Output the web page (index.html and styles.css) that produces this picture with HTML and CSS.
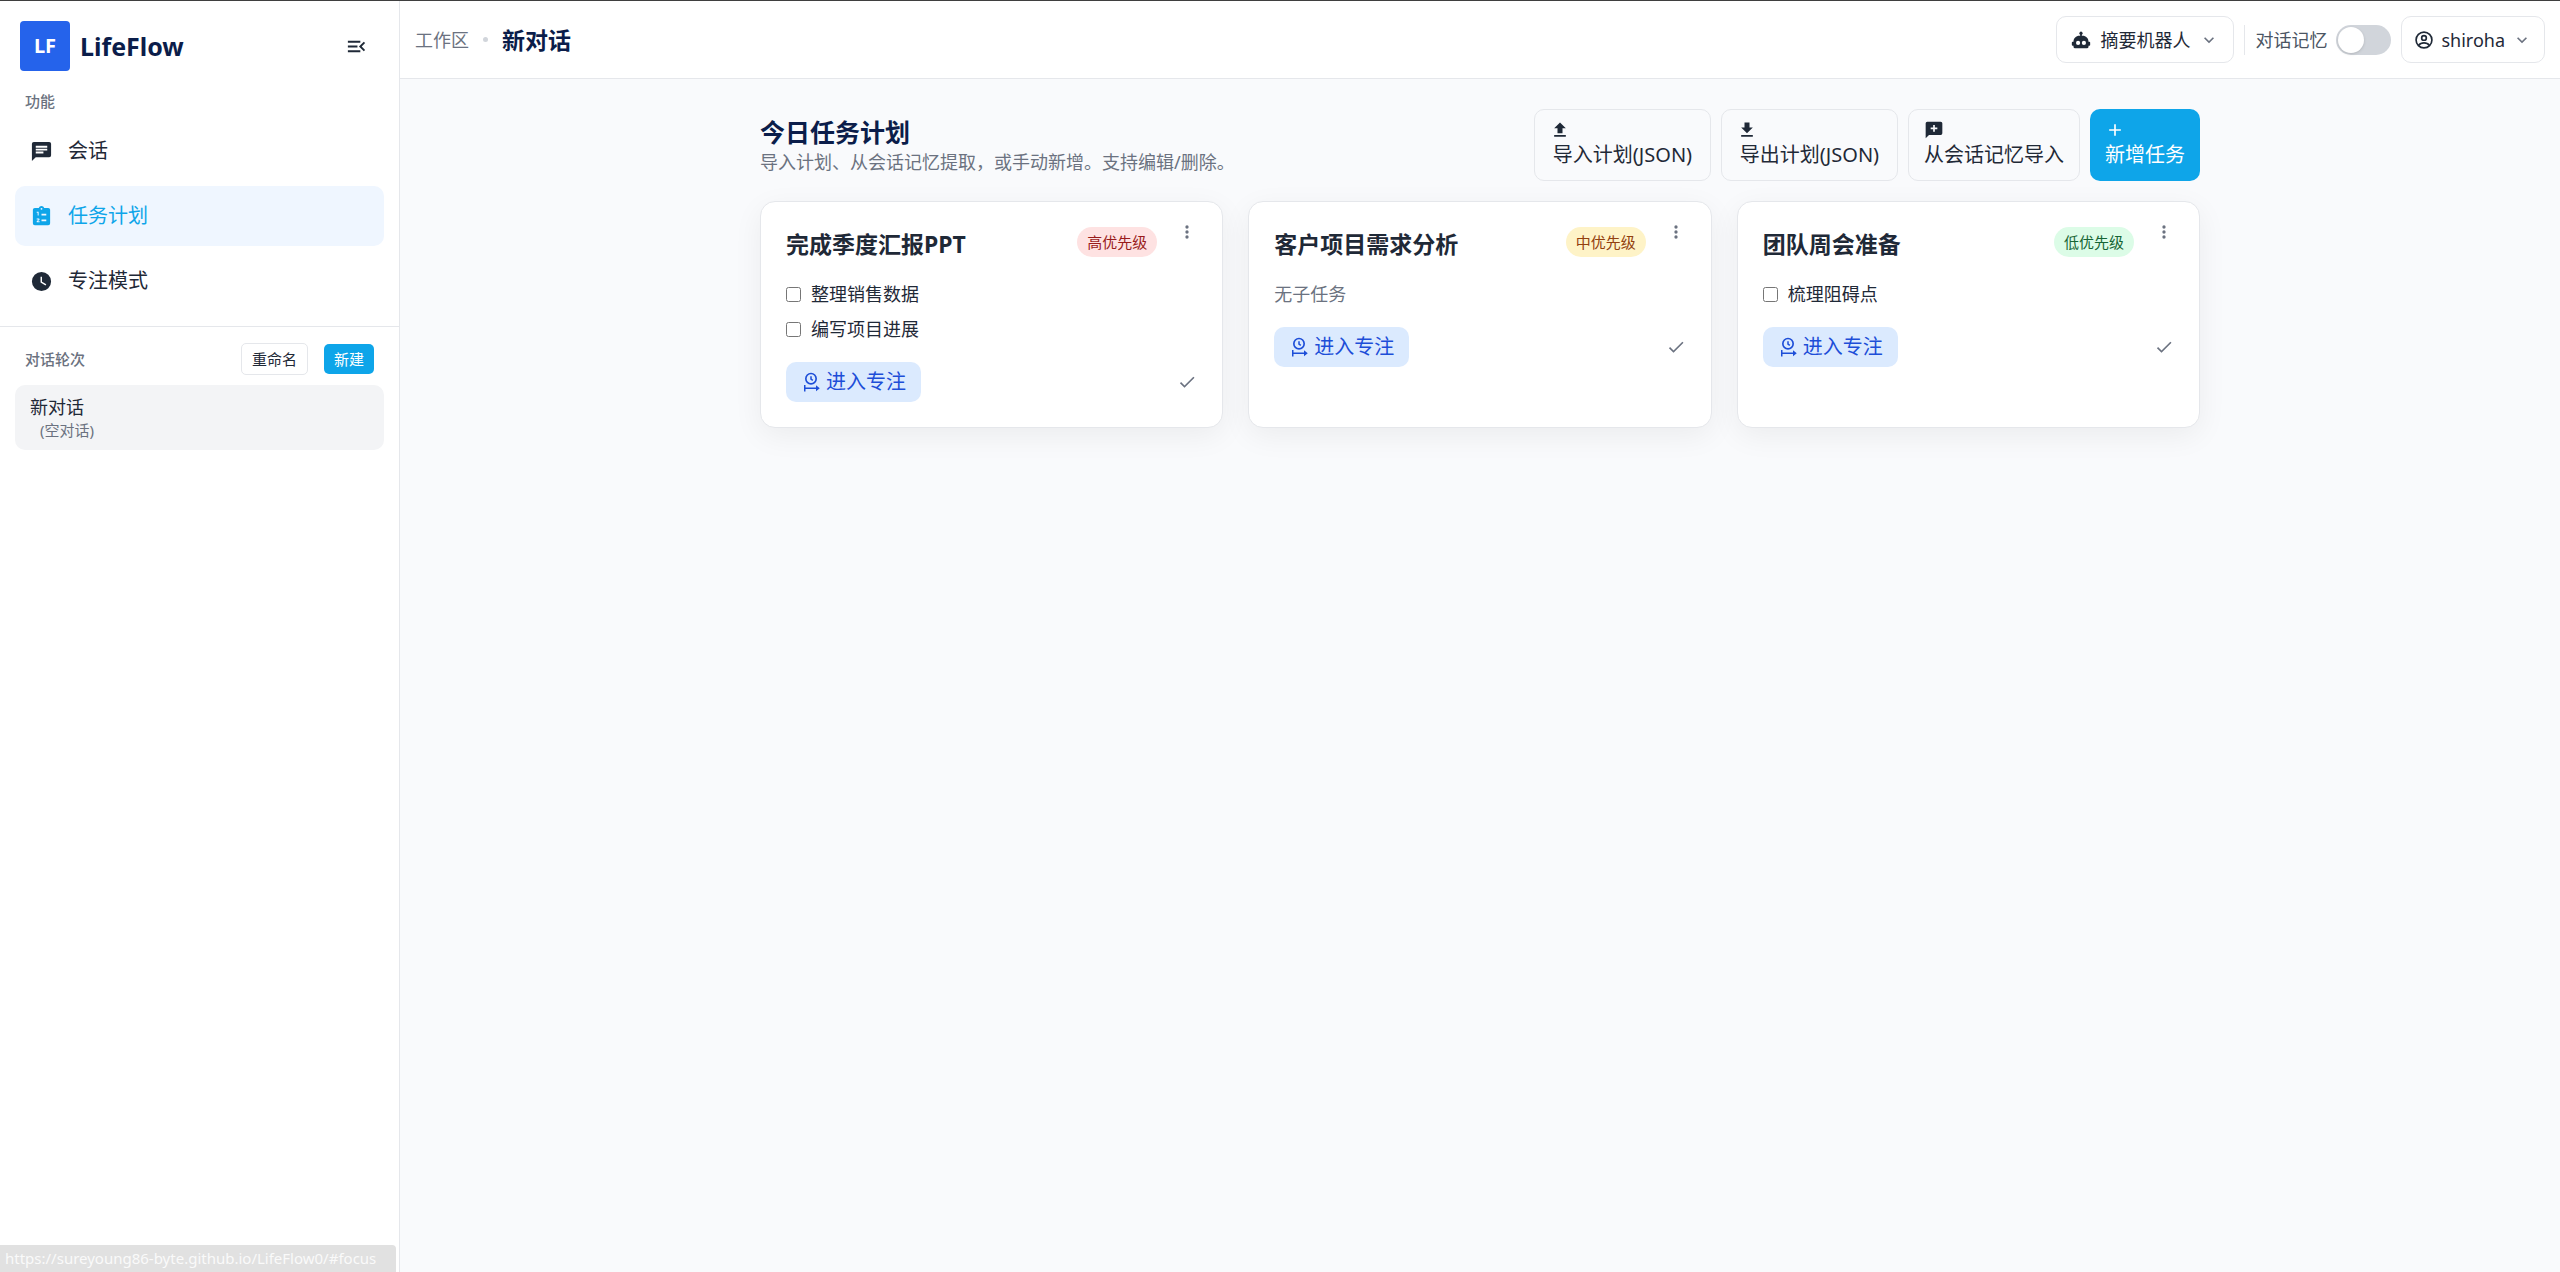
FILE: index.html
```html
<!DOCTYPE html>
<html lang="zh-CN">
<head>
  <meta charset="UTF-8">
  <meta name="viewport" content="width=device-width, initial-scale=1.0">
  <title>LifeFlow</title>
  <link rel="stylesheet" href="styles.css">
</head>
<body>
  <!-- shared icons -->
  <svg class="sprite" aria-hidden="true">
    <symbol id="i-focus" viewBox="0 0 24 24">
      <circle cx="12" cy="8" r="6.200" fill="none" stroke="currentColor" stroke-width="2"/>
      <path d="M12 5v3.400l2.200 1.600M4.500 15.500v8M4.500 19.500h14" fill="none" stroke="currentColor" stroke-width="1.800"/>
      <path d="M18 16v7l4.500-3.500z" fill="currentColor"/>
    </symbol>
    <symbol id="i-more" viewBox="0 0 24 24">
      <path fill="currentColor" d="M12 16a2 2 0 1 1 0 4 2 2 0 0 1 0-4m0-6a2 2 0 1 1 0 4 2 2 0 0 1 0-4m0-6a2 2 0 1 1 0 4 2 2 0 0 1 0-4z"/>
    </symbol>
    <symbol id="i-check" viewBox="0 0 24 24">
      <path fill="currentColor" d="M21 7 9 19l-5.500-5.500 1.410-1.410L9 16.170 19.590 5.590z"/>
    </symbol>
    <symbol id="i-down" viewBox="0 0 24 24">
      <path fill="currentColor" d="M7.410 8.580 12 13.170l4.590-4.590L18 10l-6 6-6-6z"/>
    </symbol>
  </svg>

  <div class="app">
    <aside class="sidebar">
      <div class="brand">
        <span class="logo">LF</span>
        <span class="brand-name">LifeFlow</span>
        <button class="icon-btn collapse" type="button" aria-label="收起侧栏">
          <svg class="icon-lg" viewBox="0 0 24 24"><path fill="currentColor" d="M21 15.610 19.590 17l-5.010-5 5.010-5L21 8.390 17.440 12 21 15.610M3 6h13v2H3V6m0 7v-2h10v2H3m0 5v-2h13v2H3z"/></svg>
        </button>
      </div>

      <p class="section-label">功能</p>
      <nav class="nav">
        <a class="nav-item" href="#chat">
          <svg class="icon-lg" viewBox="0 0 24 24"><path fill="currentColor" d="M20 2H4a2 2 0 0 0-2 2v18l4-4h14a2 2 0 0 0 2-2V4a2 2 0 0 0-2-2M6 9h12v2H6m8 3H6v-2h8m4-4H6V6h12"/></svg>
          会话
        </a>
        <a class="nav-item active" href="#tasks">
          <svg class="icon-lg" viewBox="0 0 24 24"><path fill="currentColor" d="M19 3h-4.180C14.400 1.840 13.300 1 12 1s-2.400.840-2.820 2H5a2 2 0 0 0-2 2v14a2 2 0 0 0 2 2h14a2 2 0 0 0 2-2V5a2 2 0 0 0-2-2m-7 0a1 1 0 1 1 0 2 1 1 0 0 1 0-2M7 7h2v4H8V8H7V7m3 10v1H7v-.920L9 15H7v-1h2.250c.410 0 .750.340.750.750 0 .200-.080.390-.210.520L8.120 17H10m1-13M17 17h-5v-2h5v2m0-6h-5V9h5v2z"/></svg>
          任务计划
        </a>
        <a class="nav-item" href="#focus">
          <svg class="icon-lg" viewBox="0 0 24 24"><path fill="currentColor" d="M12 2a10 10 0 1 0 0 20 10 10 0 0 0 0-20m4.200 14.200L11 13V7h1.500v5.200l4.500 2.700-.800 1.300z"/></svg>
          专注模式
        </a>
      </nav>

      <div class="rounds">
        <div class="rounds-head">
          <span class="rounds-title">对话轮次</span>
          <button class="btn-sm btn-outline" type="button">重命名</button>
          <button class="btn-sm btn-primary" type="button">新建</button>
        </div>
        <a class="round" href="#round">
          <span class="round-name">新对话</span>
          <span class="round-note">(空对话)</span>
        </a>
      </div>
    </aside>

    <div class="content">
      <header class="topbar">
        <span class="crumb">工作区</span>
        <span class="dot"></span>
        <h1 class="page-name">新对话</h1>
        <div class="topbar-right">
          <button class="picker" type="button">
            <svg class="icon" viewBox="0 0 24 24"><path fill="currentColor" d="M22 14h-1c0-3.870-3.130-7-7-7h-1V5.730A2 2 0 1 0 11 5.730V7h-1c-3.870 0-7 3.130-7 7H2a1 1 0 0 0-1 1v3a1 1 0 0 0 1 1h1v1a2 2 0 0 0 2 2h14a2 2 0 0 0 2-2v-1h1a1 1 0 0 0 1-1v-3a1 1 0 0 0-1-1M8.500 13a2.500 2.500 0 1 1 0 5 2.500 2.500 0 0 1 0-5m7 0a2.500 2.500 0 1 1 0 5 2.500 2.500 0 0 1 0-5z"/></svg>
            摘要机器人
            <svg class="icon chevron"><use href="#i-down"/></svg>
          </button>
          <div class="memory">
            <label for="memory">对话记忆</label>
            <input class="switch" type="checkbox" id="memory">
          </div>
          <button class="picker user" type="button">
            <svg class="icon" viewBox="0 0 24 24"><g fill="none" stroke="currentColor" stroke-width="2"><circle cx="12" cy="12" r="9.500"/><circle cx="12" cy="9.500" r="2.800"/><path d="M5.500 18.500c1.500-2 3.800-3 6.500-3s5 1 6.500 3"/></g></svg>
            shiroha
            <svg class="icon chevron"><use href="#i-down"/></svg>
          </button>
        </div>
      </header>

      <main class="main">
        <div class="plan-head">
          <div>
            <h2 class="plan-title">今日任务计划</h2>
            <p class="plan-sub">导入计划、从会话记忆提取，或手动新增。支持编辑/删除。</p>
          </div>
          <div class="actions">
            <button class="action action-file" type="button">
              <svg class="icon" viewBox="0 0 24 24"><path fill="currentColor" d="M9 16v-6H5l7-7 7 7h-4v6H9m-4 4v-2h14v2H5z"/></svg>
              导入计划(JSON)
            </button>
            <button class="action action-file" type="button">
              <svg class="icon" viewBox="0 0 24 24"><path fill="currentColor" d="M5 20h14v-2H5m14-9h-4V3H9v6H5l7 7 7-7z"/></svg>
              导出计划(JSON)
            </button>
            <button class="action" type="button">
              <svg class="icon" viewBox="0 0 24 24"><path fill="currentColor" d="M20 2H4a2 2 0 0 0-2 2v18l4-4h14a2 2 0 0 0 2-2V4a2 2 0 0 0-2-2m-4 9h-3v3h-2v-3H8V9h3V6h2v3h3v2z"/></svg>
              从会话记忆导入
            </button>
            <button class="action action-primary" type="button">
              <svg class="icon" viewBox="0 0 24 24"><path fill="currentColor" d="M19 13h-6v6h-2v-6H5v-2h6V5h2v6h6v2z"/></svg>
              新增任务
            </button>
          </div>
        </div>

        <div class="cards">
          <article class="card">
            <div class="card-head">
              <h3 class="card-title">完成季度汇报PPT</h3>
              <span class="badge high">高优先级</span>
              <button class="icon-btn more" type="button" aria-label="更多"><svg class="icon"><use href="#i-more"/></svg></button>
            </div>
            <div class="subtasks">
              <label class="subtask"><input type="checkbox">整理销售数据</label>
              <label class="subtask"><input type="checkbox">编写项目进展</label>
            </div>
            <div class="card-foot">
              <button class="focus-btn" type="button"><svg class="icon"><use href="#i-focus"/></svg>进入专注</button>
              <button class="icon-btn" type="button" aria-label="完成"><svg class="icon"><use href="#i-check"/></svg></button>
            </div>
          </article>

          <article class="card">
            <div class="card-head">
              <h3 class="card-title">客户项目需求分析</h3>
              <span class="badge medium">中优先级</span>
              <button class="icon-btn more" type="button" aria-label="更多"><svg class="icon"><use href="#i-more"/></svg></button>
            </div>
            <div class="subtasks">
              <p class="empty">无子任务</p>
            </div>
            <div class="card-foot">
              <button class="focus-btn" type="button"><svg class="icon"><use href="#i-focus"/></svg>进入专注</button>
              <button class="icon-btn" type="button" aria-label="完成"><svg class="icon"><use href="#i-check"/></svg></button>
            </div>
          </article>

          <article class="card">
            <div class="card-head">
              <h3 class="card-title">团队周会准备</h3>
              <span class="badge low">低优先级</span>
              <button class="icon-btn more" type="button" aria-label="更多"><svg class="icon"><use href="#i-more"/></svg></button>
            </div>
            <div class="subtasks">
              <label class="subtask"><input type="checkbox">梳理阻碍点</label>
            </div>
            <div class="card-foot">
              <button class="focus-btn" type="button"><svg class="icon"><use href="#i-focus"/></svg>进入专注</button>
              <button class="icon-btn" type="button" aria-label="完成"><svg class="icon"><use href="#i-check"/></svg></button>
            </div>
          </article>
        </div>
      </main>
    </div>
  </div>

  <div class="link-status">https://sureyoung86-byte.github.io/LifeFlow0/#focus</div>
</body>
</html>
```

FILE: styles.css
```css
* {
  box-sizing: border-box;
}

body {
  margin: 0;
  font-family: "Noto Sans", "Noto Sans CJK SC", sans-serif;
  font-size: 20px;
  line-height: 30px;
  color: #1f2937;
  background: #f9fafc;
}

h1, h2, h3, p {
  margin: 0;
}

button {
  font: inherit;
  color: inherit;
  cursor: pointer;
}

a {
  color: inherit;
  text-decoration: none;
}

.sprite {
  display: none;
}

.icon {
  width: 20px;
  height: 20px;
  flex: none;
}

.icon-lg {
  width: 23px;
  height: 23px;
  flex: none;
}

.icon-btn {
  display: flex;
  padding: 0;
  border: 0;
  background: none;
  color: #6b7280;
}

.app {
  display: flex;
  min-height: 100vh;
  border-top: 1px solid #3f3f3f;
}

/* sidebar */
.sidebar {
  width: 400px;
  flex: none;
  background: #fff;
  border-right: 1px solid #e5e7eb;
}

.brand {
  display: flex;
  align-items: center;
  padding: 20px 31px 10px 20px;
}

.logo {
  width: 50px;
  height: 50px;
  margin-right: 10px;
  border-radius: 4px;
  background: #2563eb;
  color: #fff;
  font-weight: 700;
  line-height: 50px;
  text-align: center;
}

.brand-name {
  font-size: 25px;
  font-weight: 700;
  color: #0b1d4a;
}

.collapse {
  margin-left: auto;
  color: #1f2937;
}

.section-label {
  padding: 5px 25px;
  font-size: 15px;
  font-weight: 500;
  line-height: 30px;
  color: #6b7280;
}

.nav {
  display: grid;
  gap: 5px;
  padding: 0 15px 15px;
}

.nav-item {
  display: flex;
  align-items: center;
  gap: 15px;
  height: 60px;
  padding: 0 15px;
  border-radius: 10px;
}

.nav-item.active {
  background: #eff6ff;
  color: #0ea5e9;
}

.rounds {
  padding: 16px 15px;
  border-top: 1px solid #e5e7eb;
}

.rounds-head {
  display: flex;
  align-items: center;
  gap: 16px;
  margin-bottom: 10px;
  padding: 0 10px;
}

.rounds-title {
  flex: 1;
  font-size: 15px;
  font-weight: 500;
  color: #6b7280;
}

.btn-sm {
  padding: 0 10px;
  border: 0;
  border-radius: 5px;
  font-size: 15px;
  line-height: 30px;
}

.btn-outline {
  border: 1px solid #e5e7eb;
  background: #fff;
}

.btn-primary {
  background: #0ea5e9;
  color: #fff;
}

.round {
  display: block;
  padding: 10px 15px;
  border-radius: 10px;
  background: #f3f4f6;
}

.round-name {
  display: block;
  font-size: 18px;
  line-height: 25px;
}

.round-note {
  display: block;
  padding-left: 10px;
  font-size: 15px;
  line-height: 20px;
  color: #6b7280;
}

/* top bar */
.content {
  flex: 1;
  min-width: 0;
}

.topbar {
  display: flex;
  align-items: center;
  padding: 15px;
  background: #fff;
  border-bottom: 1px solid #e5e7eb;
}

.crumb {
  font-size: 18px;
  color: #6b7280;
}

.dot {
  width: 5px;
  height: 5px;
  margin: 0 14px;
  border-radius: 50%;
  background: #d1d5db;
}

.page-name {
  font-size: 23px;
  font-weight: 700;
  color: #0b1d4a;
}

.topbar-right {
  display: flex;
  align-items: center;
  gap: 10px;
  margin-left: auto;
}

.picker {
  display: flex;
  align-items: center;
  gap: 9px;
  height: 47px;
  padding: 0 14px;
  border: 1px solid #e5e7eb;
  border-radius: 10px;
  background: #fff;
  font-size: 18px;
}

.user {
  gap: 7px;
  padding: 0 12px;
}

.chevron {
  color: #6b7280;
}

.memory {
  display: flex;
  align-items: center;
  gap: 9px;
  padding-left: 10px;
  border-left: 1px solid #e5e7eb;
  font-size: 18px;
  color: #4b5563;
}

.switch {
  appearance: none;
  display: flex;
  width: 55px;
  height: 30px;
  margin: 0;
  padding: 2px;
  border-radius: 15px;
  background: #d1d5db;
}

.switch::before {
  content: "";
  width: 26px;
  height: 26px;
  border-radius: 50%;
  background: #fff;
  box-shadow: 0 1px 3px rgba(0, 0, 0, 0.15);
}

.switch:checked {
  justify-content: flex-end;
  background: #0ea5e9;
}

/* task plan */
.main {
  max-width: 1440px;
  margin: 0 auto;
  padding: 30px 0;
}

.plan-head {
  display: flex;
  align-items: center;
  justify-content: space-between;
  margin-bottom: 20px;
}

.plan-title {
  font-size: 25px;
  font-weight: 700;
  line-height: 35px;
  color: #0b1d4a;
}

.plan-sub {
  font-size: 18px;
  line-height: 25px;
  color: #6b7280;
}

.actions {
  display: flex;
  gap: 10px;
}

.action {
  display: flex;
  flex-direction: column;
  justify-content: center;
  padding: 10px 15px;
  border: 1px solid #e5e7eb;
  border-radius: 10px;
  background: transparent;
}

.action-file {
  min-width: 177px;
}

.action-primary {
  border: 0;
  background: #0ea5e9;
  color: #fff;
}

.cards {
  display: grid;
  grid-template-columns: repeat(3, 1fr);
  gap: 25px;
}

.card {
  padding: 25px;
  border: 1px solid #e5e7eb;
  border-radius: 15px;
  background: #fff;
  box-shadow: 0 8px 30px rgba(0, 0, 0, 0.06);
}

.card-head {
  display: flex;
  align-items: flex-start;
  margin-bottom: 20px;
}

.card-title {
  flex: 1;
  font-size: 23px;
  font-weight: 700;
  line-height: 35px;
}

.badge {
  margin-right: 20px;
  padding: 0 10px;
  border-radius: 15px;
  font-size: 15px;
}

.high {
  background: #fee2e2;
  color: #991b1b;
}

.medium {
  background: #fef3c7;
  color: #92400e;
}

.low {
  background: #dcfce7;
  color: #166534;
}

.more {
  margin-top: -5px;
}

.subtasks {
  display: grid;
  gap: 10px;
  margin-bottom: 20px;
  font-size: 18px;
  line-height: 25px;
}

.subtask {
  display: flex;
  align-items: center;
  gap: 10px;
}

.subtask input {
  width: 15px;
  height: 15px;
  margin: 0;
}

.empty {
  color: #6b7280;
}

.card-foot {
  display: flex;
  align-items: center;
  justify-content: space-between;
}

.focus-btn {
  display: flex;
  align-items: center;
  gap: 5px;
  height: 40px;
  padding: 0 15px;
  border: 0;
  border-radius: 10px;
  background: #dbeafe;
  color: #1d4ed8;
}

.link-status {
  position: fixed;
  left: 0;
  bottom: 0;
  padding: 0 20px 0 5px;
  border-top-right-radius: 4px;
  background: #e1e1e1;
  color: #fafafa;
  font-size: 15px;
  line-height: 27px;
}
```
